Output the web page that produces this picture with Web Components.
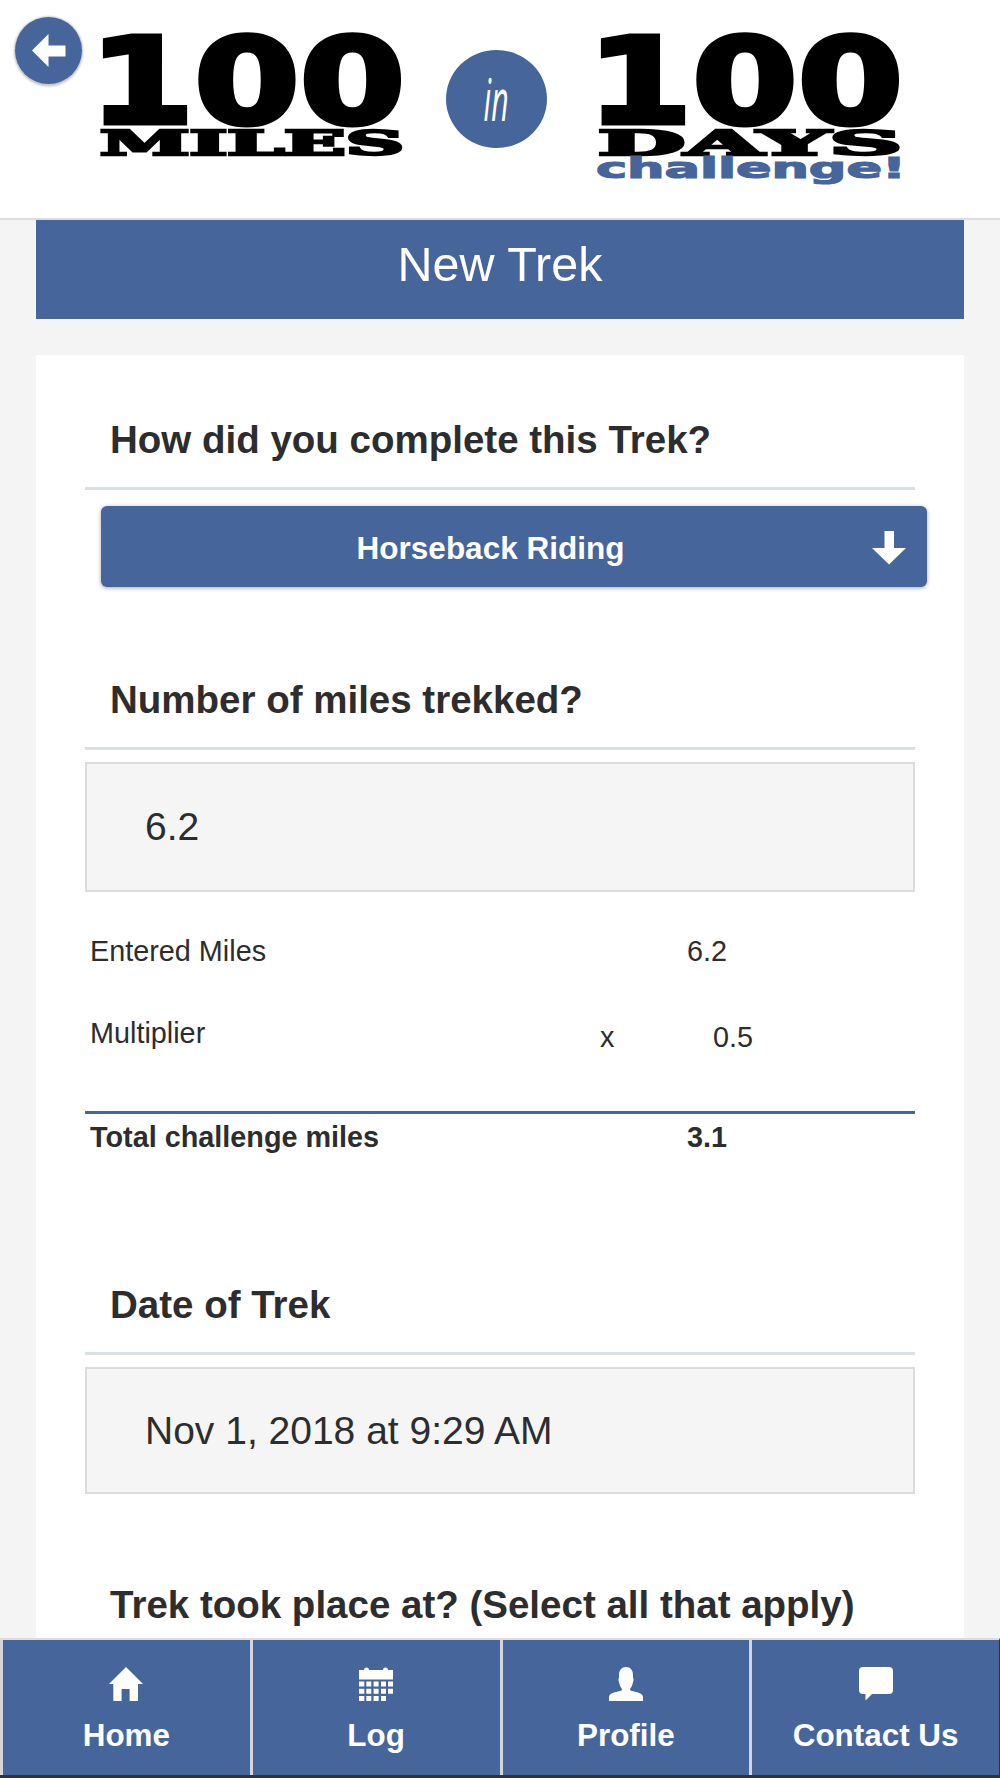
<!DOCTYPE html>
<html>
<head>
<meta charset="utf-8">
<title>New Trek</title>
<style>
  html, body { margin: 0; padding: 0; background: #f4f4f4; }
  body {
    height: 1778px;
    overflow: hidden;
    display: flex;
    flex-direction: column;
    font-family: "Liberation Sans", Arial, sans-serif;
    color: #2d2d2d;
  }
</style>
</head>
<body>
  <trek-header></trek-header>
  <trek-page>
    <trek-section heading="How did you complete this Trek?" style="margin-top: 65px">
      <trek-select>Horseback Riding</trek-select>
    </trek-section>
    <trek-section heading="Number of miles trekked?" style="margin-top: 93px">
      <trek-input style="height: 130px">6.2</trek-input>
      <miles-table></miles-table>
    </trek-section>
    <trek-section heading="Date of Trek" style="margin-top: 96px">
      <trek-input>Nov 1, 2018 at 9:29 AM</trek-input>
    </trek-section>
    <trek-section heading="Trek took place at? (Select all that apply)" style="margin-top: 91px"></trek-section>
  </trek-page>
  <trek-footer></trek-footer>

<script>
// Logo block: "100" over a word, with an optional tag line
class TrekLogo extends HTMLElement {
  connectedCallback() {
    const word = this.getAttribute('word');
    const tag = this.getAttribute('tag');
    const root = this.attachShadow({ mode: 'open' });
    root.innerHTML = `
      <style>
        :host { display: block; width: 306px; height: 152px; }
        svg { display: block; overflow: visible; }
        text { font-family: "DejaVu Serif", serif; font-weight: 700; }
        .num, .tag { font-family: "DejaVu Sans", sans-serif; }
      </style>
      <svg width="306" height="152" viewBox="0 0 306 152">
        <text class="num" x="-11" y="90" font-size="119" textLength="316" lengthAdjust="spacingAndGlyphs" stroke="#000" stroke-width="5">100</text>
        <text x="0" y="122" font-size="33" textLength="304" lengthAdjust="spacingAndGlyphs" stroke="#000" stroke-width="2.5">${word}</text>
        ${tag ? `<text class="tag" x="-2" y="145" font-size="28" fill="#46659b" textLength="310" lengthAdjust="spacingAndGlyphs" stroke="#46659b" stroke-width="1.2">${tag}</text>` : ''}
      </svg>`;
  }
}
customElements.define('trek-logo', TrekLogo);

class TrekHeader extends HTMLElement {
  constructor() {
    super();
    const root = this.attachShadow({ mode: 'open' });
    root.innerHTML = `
      <style>
        :host {
          display: block;
          position: relative;
          flex: none;
          height: 218px;
          background: #fff;
          border-bottom: 2px solid #dcdde2;
        }
        .row {
          display: flex;
          align-items: flex-start;
          padding: 33px 0 0 100px;
        }
        .in {
          width: 101px;
          height: 98px;
          margin: 17px 51px 0 40px;
          border-radius: 50%;
          background: #46659b;
          color: #fff;
          display: flex;
          align-items: center;
          justify-content: center;
          font: italic 400 58px "Open Sans", sans-serif;
        }
        .in span { transform: scaleX(.52); display: block; line-height: 58px; }
        .back {
          position: absolute;
          left: 15px;
          top: 17px;
          width: 67px;
          height: 67px;
          border-radius: 50%;
          background: #46659b;
          box-shadow: 0 0 2px 1px #ccc, 0 2px 3px #bbb;
          display: flex;
          align-items: center;
          justify-content: center;
        }
      </style>
      <div class="row">
        <trek-logo word="MILES"></trek-logo>
        <div class="in"><span>in</span></div>
        <trek-logo word="DAYS" tag="challenge!"></trek-logo>
      </div>
      <div class="back">
        <svg width="34" height="34" viewBox="0 0 34 34"><path fill="#fff" d="M0 16.5 16.5 0v11.500h17v11h-17V33z"/></svg>
      </div>`;
  }
}
customElements.define('trek-header', TrekHeader);

// Banner and white card
class TrekPage extends HTMLElement {
  constructor() {
    super();
    const root = this.attachShadow({ mode: 'open' });
    root.innerHTML = `
      <style>
        :host {
          display: flex;
          flex-direction: column;
          flex: 1;
          min-height: 0;
          margin: 0 36px;
          overflow: hidden;
        }
        h1 {
          margin: 0;
          flex: none;
          height: 99px;
          line-height: 88px;
          background: #46659b;
          color: #fff;
          text-align: center;
          font-size: 48.500px;
          font-weight: 400;
        }
        .card {
          flex: 1;
          min-height: 0;
          margin-top: 36px;
          padding: 0 49px;
          background: #fff;
          display: flow-root;
        }
      </style>
      <h1>New Trek</h1>
      <div class="card"><slot></slot></div>`;
  }
}
customElements.define('trek-page', TrekPage);

class TrekSection extends HTMLElement {
  constructor() {
    super();
    const root = this.attachShadow({ mode: 'open' });
    root.innerHTML = `
      <style>
        :host { display: block; }
        h2 {
          margin: 0;
          padding: 0 0 27px 25px;
          font-size: 38.500px;
          line-height: 40px;
          font-weight: 700;
          color: #2d2d2d;
          border-bottom: 3px solid #d8e0e4;
        }
      </style>
      <h2></h2>
      <slot></slot>`;
    this._title = root.querySelector('h2');
  }

  connectedCallback() {
    this._title.textContent = this.getAttribute('heading');
  }
}
customElements.define('trek-section', TrekSection);

class TrekSelect extends HTMLElement {
  constructor() {
    super();
    const root = this.attachShadow({ mode: 'open' });
    root.innerHTML = `
      <style>
        :host {
          display: flex;
          align-items: center;
          justify-content: center;
          position: relative;
          box-sizing: border-box;
          height: 81px;
          margin: 16px -12px 0 16px;
          padding: 4px 47px 0 0;
          background: #46659b;
          border-radius: 6px;
          box-shadow: 0 1px 4px rgba(0,0,0,.35);
          color: #fff;
          font-size: 31.500px;
          font-weight: 700;
        }
        svg { position: absolute; right: 21px; top: 25px; }
      </style>
      <slot></slot>
      <svg width="34" height="34" viewBox="0 0 34 34"><path fill="#fff" d="M12.500 0h9.500v17H34L17 33.500 0 17h12.500z"/></svg>`;
  }
}
customElements.define('trek-select', TrekSelect);

class TrekInput extends HTMLElement {
  constructor() {
    super();
    const root = this.attachShadow({ mode: 'open' });
    root.innerHTML = `
      <style>
        :host {
          display: flex;
          align-items: center;
          box-sizing: border-box;
          height: 127px;
          margin-top: 12px;
          padding: 0 0 0 58px;
          background: #f5f5f5;
          border: 2px solid #dcdcdc;
          font-size: 39px;
          color: #2d2d2d;
        }
      </style>
      <slot></slot>`;
  }
}
customElements.define('trek-input', TrekInput);

class MilesTable extends HTMLElement {
  constructor() {
    super();
    const root = this.attachShadow({ mode: 'open' });
    root.innerHTML = `
      <style>
        :host {
          display: block;
          font-size: 28.800px;
          line-height: 32px;
          color: #2d2d2d;
          padding: 43px 0 7px;
        }
        .row {
          display: grid;
          grid-template-columns: 510px 87px 1fr;
          padding-left: 5px;
        }
        .one { height: 82px; }
        .two { height: 94px; border-bottom: 3px solid #46659b; margin-bottom: 7px; }
        .low { padding-top: 4px; }
        .shift { padding-left: 26px; }
        .total { font-weight: 700; height: 61px; }
      </style>
      <div class="row one"><span>Entered Miles</span><span></span><span>6.2</span></div>
      <div class="row two"><span>Multiplier</span><span class="low">x</span><span class="low shift">0.5</span></div>
      <div class="row total"><span>Total challenge miles</span><span></span><span>3.1</span></div>`;
  }
}
customElements.define('miles-table', MilesTable);

class TrekFooter extends HTMLElement {
  constructor() {
    super();
    const icons = {
      Home: '<path d="M17 0 0 17h4.300v17h8.300V22h8v12h8.400V17H34z"/>',
      Log: '<path d="M0 3h5a2.500 2.500 0 0 1 5 0h14a2.500 2.500 0 0 1 5 0h5v9.500H0zM0 14.500h5.300v5H0zM7.300 14.500h5v5h-5zM14.600 14.500h5v5h-5zM22 14.500h5v5h-5zM29 14.500h5v5h-5zM0 21.700h5.300v5H0zM7.300 21.700h5v5h-5zM14.600 21.700h5v5h-5zM22 21.700h5v5h-5zM29 21.700h5v5h-5zM0 29h5.300v5H0zM7.300 29h5v5h-5zM14.600 29h5v5h-5zM22 29h5v5h-5z"/>',
      Profile: '<path d="M17 0C21.500 0 24 3.500 24 8v3c.8.500.8 3 0 4-.5 3-1.500 5-3 7 0 1.500 1 2 4 2.500 5 1 9 2.500 9 5.500v4H0v-4c0-3 4-4.500 9-5.500 3-.5 4-1 4-2.500-1.500-2-2.500-4-3-7-.8-1-.8-3.500 0-4V8C10 3.500 12.500 0 17 0z"/>',
      'Contact Us': '<path d="M4 0h26a4 4 0 0 1 4 4v19a4 4 0 0 1-4 4H13l-6.500 6.500V27H4a4 4 0 0 1-4-4V4a4 4 0 0 1 4-4z"/>'
    };
    const cells = Object.keys(icons).map(name => `
      <div class="cell">
        <svg width="34" height="34" viewBox="0 0 34 34" fill="#fff">${icons[name]}</svg>
        <span>${name}</span>
      </div>`).join('');
    const root = this.attachShadow({ mode: 'open' });
    root.innerHTML = `
      <style>
        :host {
          display: grid;
          grid-template-columns: repeat(4, 1fr);
          flex: none;
          box-sizing: border-box;
          height: 140px;
          background: #46659b;
          border-top: 2px solid #dcdde2;
          border-bottom: 3px solid #2f3336;
          border-right: 1px solid #2f3336;
        }
        .cell {
          display: flex;
          flex-direction: column;
          align-items: center;
          border-left: 3px solid #d4d6da;
          padding-top: 27px;
          color: #fff;
          font-size: 31.400px;
          font-weight: 700;
        }
        .cell:first-child { border-left-width: 2px; }
        span { margin-top: 15px; line-height: 40px; }
      </style>
      ${cells}`;
  }
}
customElements.define('trek-footer', TrekFooter);
</script>
</body>
</html>
